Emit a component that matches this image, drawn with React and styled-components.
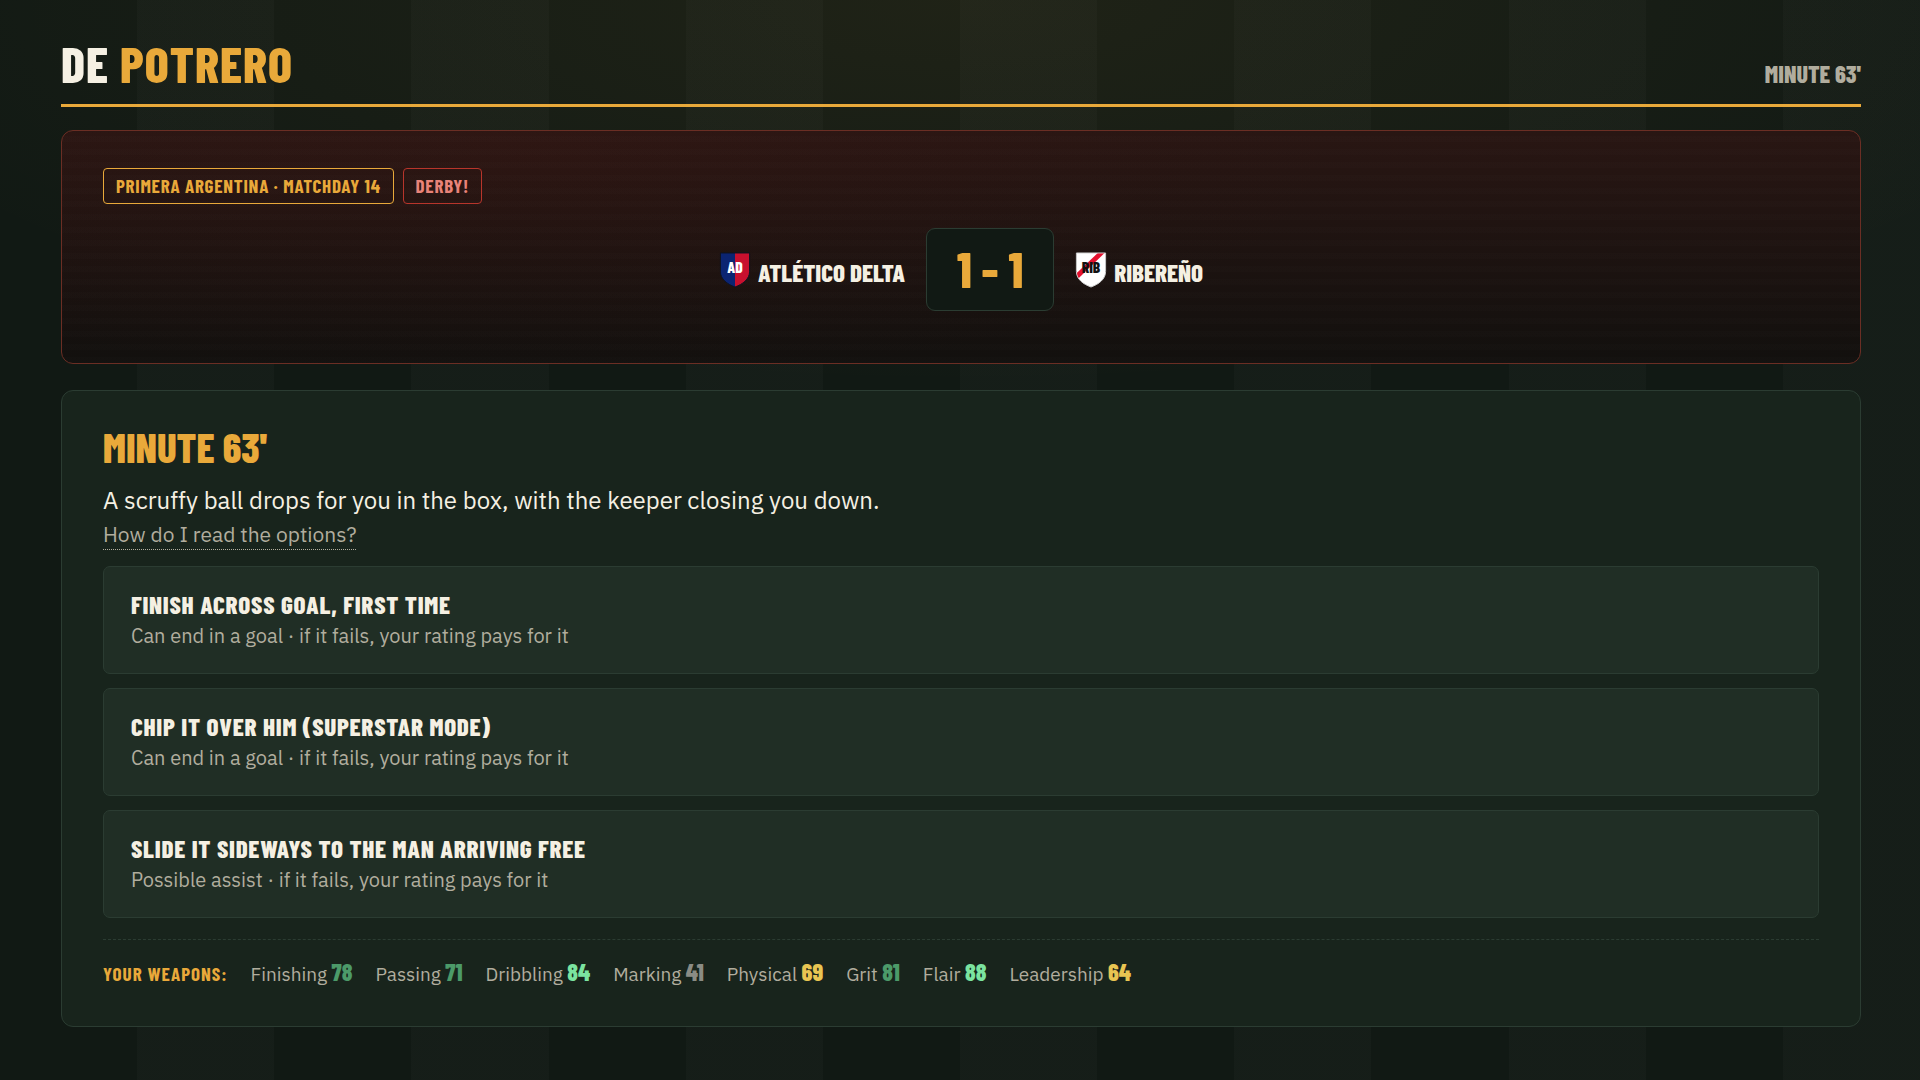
import React from "react";
import styled, { createGlobalStyle } from "styled-components";

const display = `"Barlow Condensed", "Roboto Condensed", Roboto, sans-serif`;
const body = `"IBM Plex Sans", "Noto Sans", sans-serif`;

const color = {
  cream: "#f5f0e3",
  muted: "#b1ad9e",
  gold: "#e9a93a",
  line: "#2b3c32",
  card: "#18241c",
  option: "#202e25",
  night: "#111914",
};

const GlobalStyle = createGlobalStyle`
  *, *::before, *::after { box-sizing: border-box; }
  body {
    margin: 0;
    min-height: 100vh;
    color: ${color.cream};
    font-family: ${body};
    background:
      radial-gradient(ellipse 62% 36% at 50% 0%, rgba(233, 169, 58, 0.065), transparent),
      repeating-linear-gradient(
        90deg,
        transparent 0 calc(100% / 14),
        rgba(255, 255, 255, 0.02) calc(100% / 14) calc(100% / 7)
      ),
      ${color.night};
  }
  h1, h2, p { margin: 0; padding: 0; }
  button { font: inherit; color: inherit; cursor: pointer; }
`;

const Page = styled.div`
  padding: 36px 59px 52px 61px;
`;

const Header = styled.header`
  display: flex;
  justify-content: space-between;
  align-items: baseline;
  padding-bottom: 14px;
  border-bottom: 3px solid ${color.gold};
  font-family: ${display};
  text-transform: uppercase;
`;

const Brand = styled.h1`
  font-size: 50px;
  line-height: 54px;
  font-weight: 800;
  letter-spacing: 1px;

  em {
    font-style: normal;
    color: ${color.gold};
  }
`;

const Clock = styled.span`
  font-size: 24px;
  font-weight: 800;
  color: ${color.muted};
`;

const Card = styled.section`
  border: 1px solid ${color.line};
  border-radius: 12px;
  background: ${color.card};
  padding: 34px 41px 37px;
`;

const ScoreCard = styled(Card)`
  margin: 23px 0 26px;
  padding: 37px 41px 52px;
  border-color: #6b2e24;
  background:
    repeating-linear-gradient(0deg, rgba(255, 255, 255, 0.008) 0 6px, transparent 6px 13px),
    radial-gradient(ellipse 45% 100% at 26% 10%, rgba(120, 30, 22, 0.08), transparent),
    linear-gradient(180deg, #291613, #12100e);
`;

const Tags = styled.div`
  display: flex;
  gap: 9px;
`;

const Tag = styled.span`
  padding: 0 12px;
  border: 1px solid ${(p) => p.$border};
  border-radius: 4px;
  color: ${(p) => p.$color};
  font: 700 19px/34px ${display};
  letter-spacing: 0.04em;
  text-transform: uppercase;
`;

const Scoreboard = styled.div`
  display: flex;
  justify-content: center;
  align-items: center;
  gap: 21px;
  margin-top: 24px;
`;

const Team = styled.div`
  display: flex;
  align-items: flex-end;
  gap: 7px;
  font: 800 25px/32px ${display};
  text-transform: uppercase;

  svg {
    width: 32px;
    height: 36px;
  }
`;

const Score = styled.output`
  padding: 9px 30px 12px;
  border: 1px solid ${color.line};
  border-radius: 9px;
  background: ${color.night};
  color: ${color.gold};
  font: 800 50px/60px ${display};
`;

const Title = styled.h2`
  color: ${color.gold};
  font: 800 41px/44px ${display};
  text-transform: uppercase;
`;

const Situation = styled.p`
  margin-top: 12px;
  font-size: 24px;
  line-height: 38px;
`;

const HelpButton = styled.button`
  display: block;
  padding: 0;
  border: 0;
  border-bottom: 1px dotted ${color.muted};
  background: none;
  color: ${color.muted};
  font-size: 21px;
  line-height: 30px;
`;

const Options = styled.div`
  display: grid;
  gap: 14px;
  margin-top: 16px;
`;

const Option = styled.button`
  padding: 21px 27px;
  border: 1px solid ${color.line};
  border-radius: 7px;
  background: ${color.option};
  text-align: left;
`;

const OptionTitle = styled.span`
  display: block;
  font: 800 25px/32px ${display};
  letter-spacing: 0.03em;
  text-transform: uppercase;
`;

const OptionNote = styled.span`
  display: block;
  color: ${color.muted};
  font-size: 20px;
  line-height: 32px;
`;

const Weapons = styled.div`
  display: flex;
  flex-wrap: wrap;
  align-items: baseline;
  gap: 0 23px;
  margin-top: 21px;
  padding-top: 18px;
  border-top: 1px dashed ${color.line};
  color: ${color.muted};
  font-size: 19px;
  line-height: 29px;
`;

const WeaponsLabel = styled.span`
  color: ${color.gold};
  font: 700 19px/28px ${display};
  letter-spacing: 1px;
  text-transform: uppercase;
`;

const Rating = styled.b`
  color: ${(p) => p.$color};
  font: 800 24px/28px ${display};
`;

const shield = "M1 1H31V20C31 28 24 33 16 36C8 33 1 28 1 20Z";

function DeltaCrest() {
  return (
    <svg viewBox="0 0 32 37" aria-hidden="true">
      <clipPath id="delta"><path d={shield} /></clipPath>
      <g clipPath="url(#delta)">
        <path d="M0 0H16V37H0Z" fill="#0b2472" />
        <path d="M16 0H32V37H16Z" fill="#c8102e" />
      </g>
      <path d={shield} fill="none" stroke="#0d1424" />
      <text x="16" y="22" textAnchor="middle" fill="#fff" fontFamily={display} fontWeight="800" fontSize="16">AD</text>
    </svg>
  );
}

function RibereñoCrest() {
  return (
    <svg viewBox="0 0 32 37" aria-hidden="true">
      <clipPath id="ribereno"><path d={shield} /></clipPath>
      <g clipPath="url(#ribereno)">
        <path d="M0 0H32V37H0Z" fill="#fff" />
        <path d="M24 0H31L0 30V23Z" fill="#e4102e" />
      </g>
      <path d={shield} fill="none" stroke="#cfd0d0" />
      <text x="16" y="22" textAnchor="middle" fill="#111" fontFamily={display} fontWeight="800" fontSize="16">RIB</text>
    </svg>
  );
}

const options = [
  ["Finish across goal, first time", "Can end in a goal · if it fails, your rating pays for it"],
  ["Chip it over him (superstar mode)", "Can end in a goal · if it fails, your rating pays for it"],
  ["Slide it sideways to the man arriving free", "Possible assist · if it fails, your rating pays for it"],
];

const weapons = [
  ["Finishing", 78],
  ["Passing", 71],
  ["Dribbling", 84],
  ["Marking", 41],
  ["Physical", 69],
  ["Grit", 81],
  ["Flair", 88],
  ["Leadership", 64],
];

function ratingColor(value) {
  if (value >= 84) return "#7be3a0";
  if (value >= 70) return "#4c9a69";
  if (value >= 60) return "#e8c552";
  return "#8a8c85";
}

export default function App() {
  return (
    <Page>
      <GlobalStyle />
      <Header>
        <Brand>De <em>Potrero</em></Brand>
        <Clock>Minute 63'</Clock>
      </Header>
      <main>
        <ScoreCard>
          <Tags>
            <Tag $border={color.gold} $color={color.gold}>Primera Argentina · Matchday 14</Tag>
            <Tag $border="#b8352b" $color="#e98379">Derby!</Tag>
          </Tags>
          <Scoreboard>
            <Team><DeltaCrest />Atlético Delta</Team>
            <Score>1 - 1</Score>
            <Team><RibereñoCrest />Ribereño</Team>
          </Scoreboard>
        </ScoreCard>
        <Card>
          <Title>Minute 63'</Title>
          <Situation>A scruffy ball drops for you in the box, with the keeper closing you down.</Situation>
          <HelpButton type="button">How do I read the options?</HelpButton>
          <Options>
            {options.map(([title, note]) => (
              <Option type="button" key={title}>
                <OptionTitle>{title}</OptionTitle>
                <OptionNote>{note}</OptionNote>
              </Option>
            ))}
          </Options>
          <Weapons>
            <WeaponsLabel>Your weapons:</WeaponsLabel>
            {weapons.map(([name, value]) => (
              <span key={name}>{name} <Rating $color={ratingColor(value)}>{value}</Rating></span>
            ))}
          </Weapons>
        </Card>
      </main>
    </Page>
  );
}
